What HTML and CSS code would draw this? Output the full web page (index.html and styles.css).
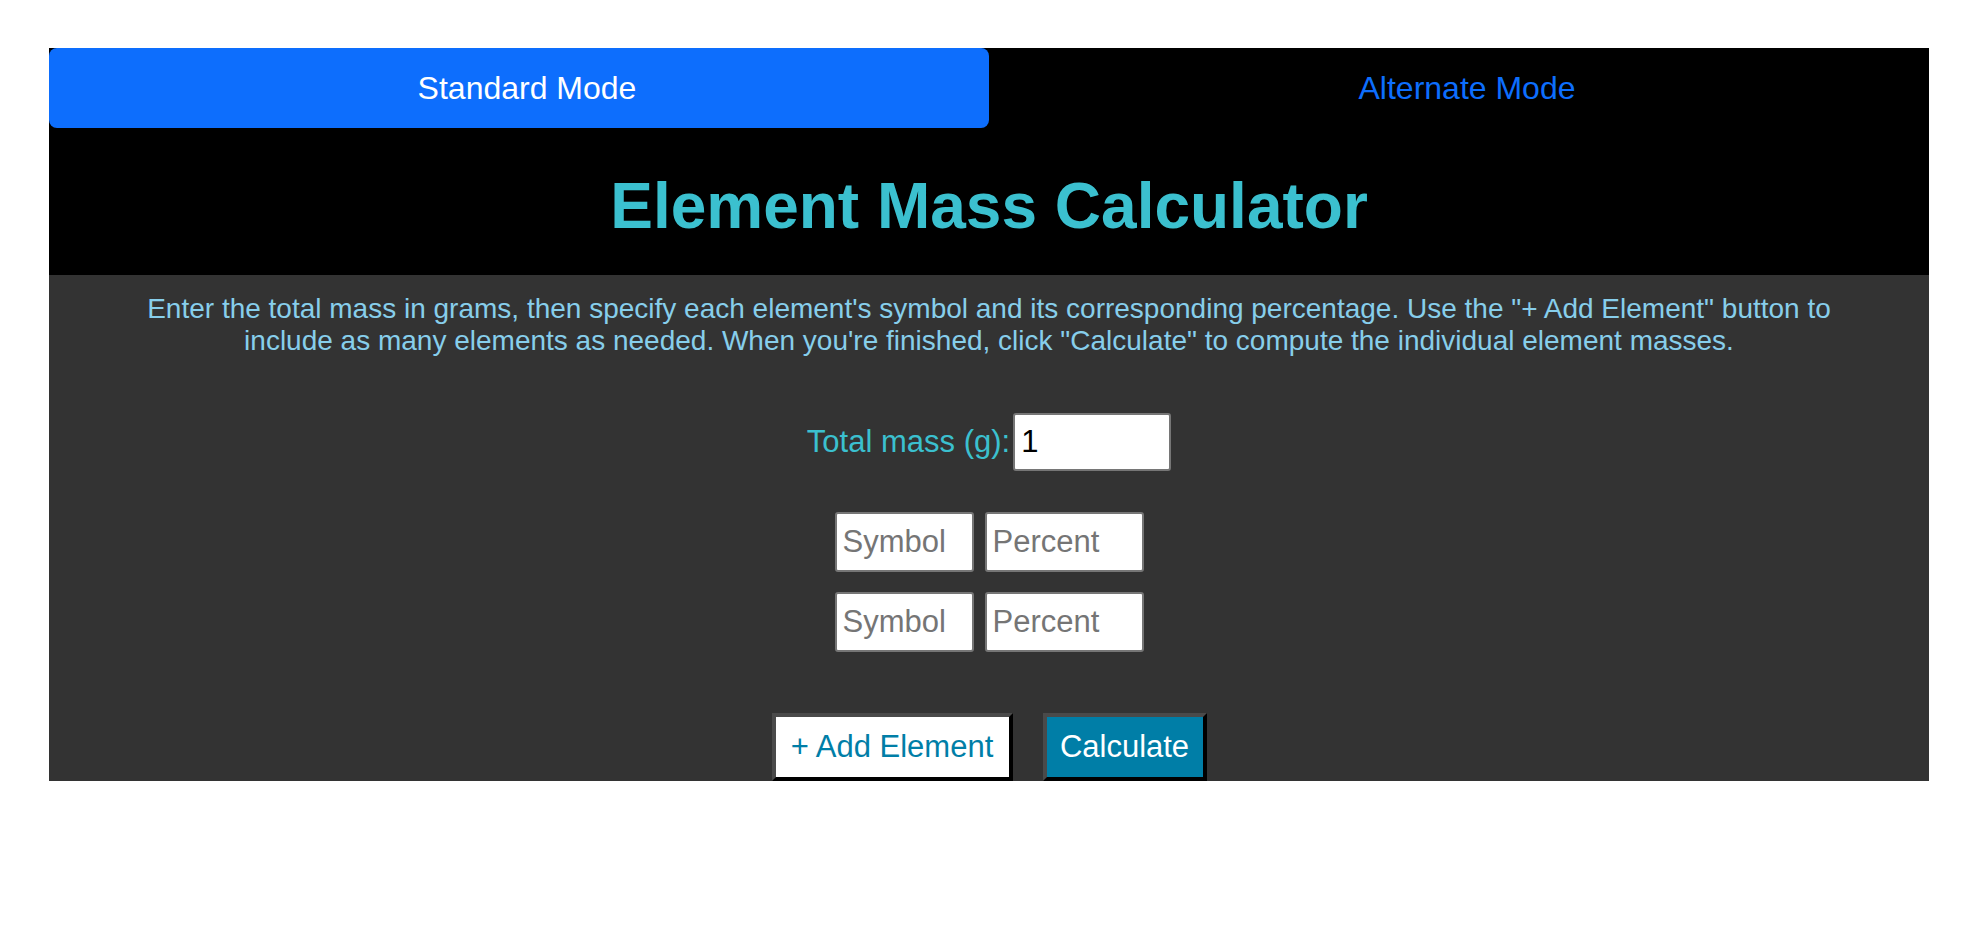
FILE: index.html
```html
<!DOCTYPE html>
<html>
<head>
<meta charset="utf-8">
<link rel="stylesheet" href="styles.css">
</head>
<body>
<div class="app">
  <header class="top">
    <nav class="tabs">
      <div class="tab active">Standard Mode</div>
      <div class="tab">Alternate Mode</div>
    </nav>
    <h1 class="title">Element Mass Calculator</h1>
  </header>
  <main class="body">
    <p class="intro">Enter the total mass in grams, then specify each element's symbol and its corresponding percentage. Use the "+ Add Element" button to include as many elements as needed. When you're finished, click "Calculate" to compute the individual element masses.</p>
    <div class="total-row">
      <label class="total-label">Total mass (g):</label>
      <input class="field total" type="text" value="1">
    </div>
    <div class="elements">
      <div class="el-row">
        <input class="field sym" type="text" placeholder="Symbol">
        <input class="field pct" type="text" placeholder="Percent">
      </div>
      <div class="el-row">
        <input class="field sym" type="text" placeholder="Symbol">
        <input class="field pct" type="text" placeholder="Percent">
      </div>
    </div>
    <div class="actions">
      <button class="btn add">+ Add Element</button>
      <button class="btn calc">Calculate</button>
    </div>
  </main>
</div>
</body>
</html>
```
FILE: styles.css
```css
* { box-sizing: border-box; }
html, body { margin: 0; padding: 0; background: #fff; }
body { font-family: "Liberation Sans", Arial, sans-serif; }

.app {
  margin: 48px 53px 0 49px;
  width: 1880px;
}

.top { background: #000; }

.tabs { display: flex; height: 80px; }
.tab {
  flex: 1;
  display: flex;
  align-items: center;
  justify-content: center;
  padding-left: 16px;
  font-size: 32px;
  color: #0d6efd;
}
.tab.active { background: #0d6efd; color: #fff; border-radius: 8px; }

.title {
  margin: 0;
  padding: 41px 0 32px;
  text-align: center;
  font-size: 64px;
  font-weight: bold;
  line-height: 74px;
  color: #3bc0cf;
}

.body {
  background: #333;
  display: flex;
  flex-direction: column;
  align-items: center;
  padding-top: 18px;
}

.intro {
  margin: 0;
  padding: 0 60px;
  text-align: center;
  font-size: 28px;
  line-height: 32.4px;
  color: #87ceeb;
}

.total-row {
  display: flex;
  align-items: center;
  gap: 3px;
  margin-top: 55px;
}
.total-label { font-size: 31px; color: #3bc0cf; }

.field {
  height: 58px;
  border: 2px solid #767676;
  border-radius: 3px;
  background: #fff;
  font-family: "Liberation Sans", Arial, sans-serif;
  font-size: 31px;
  padding: 0 6px;
  color: #000;
}
.field::placeholder { color: #757575; }
.total { width: 158px; }

.elements {
  display: flex;
  flex-direction: column;
  gap: 20px;
  margin-top: 41px;
}
.el-row { display: flex; gap: 11px; }
.sym { width: 139px; height: 60px; }
.pct { width: 159px; height: 60px; }

.actions {
  display: flex;
  gap: 30px;
  margin-top: 61px;
}
.btn {
  height: 68px;
  font-family: "Liberation Sans", Arial, sans-serif;
  font-size: 31px;
  padding: 0 12px;
  border: 4px solid;
  border-color: #4a4a4a #000 #000 #4a4a4a;
}
.add { width: 241px; background: #fff; color: #007ea7; }
.calc { width: 164px; background: #007ea7; color: #fff; }
```
